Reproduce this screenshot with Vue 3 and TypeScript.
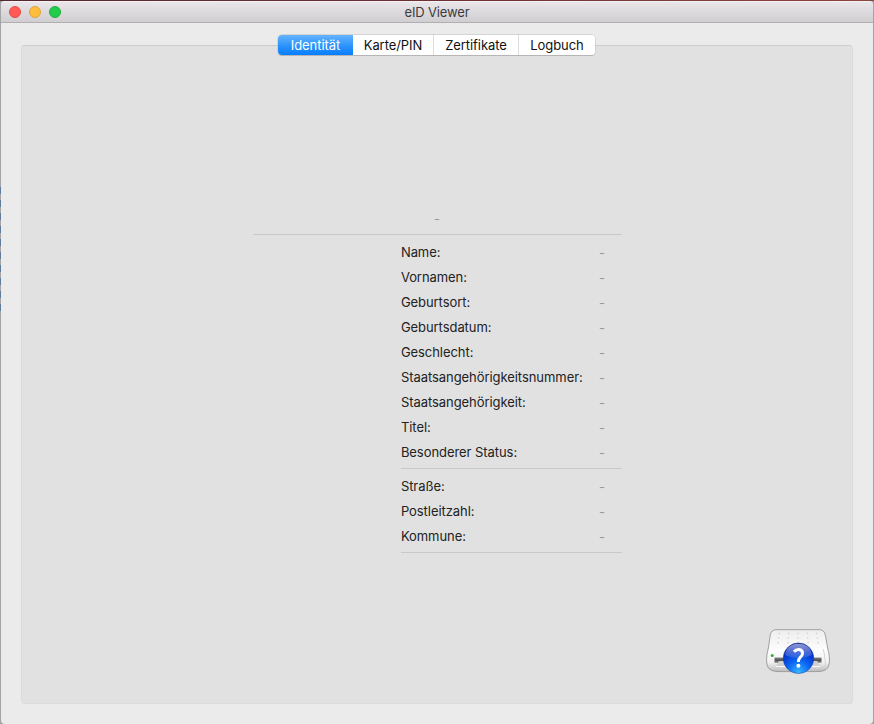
<script setup lang="ts">
import { ref } from 'vue'

interface Field {
  label: string
  value: string
}

const tabs: string[] = ['Identität', 'Karte/PIN', 'Zertifikate', 'Logbuch']
const active = ref<number>(0)

const toFields = (labels: string[]): Field[] => labels.map((label) => ({ label, value: '-' }))

const groups: Field[][] = [
  toFields([
    'Name:',
    'Vornamen:',
    'Geburtsort:',
    'Geburtsdatum:',
    'Geschlecht:',
    'Staatsangehörigkeitsnummer:',
    'Staatsangehörigkeit:',
    'Titel:',
    'Besonderer Status:',
  ]),
  toFields(['Straße:', 'Postleitzahl:', 'Kommune:']),
]

const dots: { x: number; y: number }[] = [0, 1, 2].flatMap((r) =>
  [0, 1, 2, 3, 4].map((c) => ({ x: 13 + c * 10 - (c - 2) * (2 - r) * 0.3, y: 4.3 + r * 4.7 })),
)
</script>

<template>
  <div class="desktop">
    <main class="window">
      <header class="titlebar">
        <div class="lights">
          <i class="light close"></i>
          <i class="light minimize"></i>
          <i class="light zoom"></i>
        </div>
        <h1 class="title">eID Viewer</h1>
      </header>
      <div class="content">
        <section class="panel">
          <nav class="tabs">
            <button
              v-for="(tab, i) in tabs"
              :key="tab"
              type="button"
              :class="['tab', 'tab-' + i, { active: active === i }]"
              @click="active = i"
            >
              {{ tab }}
            </button>
          </nav>
          <div class="identity">
            <div class="card-type"><span>-</span></div>
            <div v-for="(group, g) in groups" :key="g" class="group">
              <div v-for="field in group" :key="field.label" class="row">
                <span class="label">{{ field.label }}</span>
                <span class="value">{{ field.value }}</span>
              </div>
            </div>
          </div>
          <svg class="reader" width="66" height="48" viewBox="0 0 66 48">
            <defs>
              <linearGradient id="top" x1="0" y1="0" x2="0" y2="1">
                <stop offset="0" stop-color="#ededed" />
                <stop offset="0.4" stop-color="#fafafa" />
                <stop offset="0.75" stop-color="#f4f4f4" />
                <stop offset="1" stop-color="#bdbdbd" />
              </linearGradient>
              <linearGradient id="front" x1="0" y1="0" x2="0" y2="1">
                <stop offset="0" stop-color="#ffffff" />
                <stop offset="0.65" stop-color="#f1f1f1" />
                <stop offset="1" stop-color="#c4c4c4" />
              </linearGradient>
              <linearGradient id="slot" x1="0" y1="0" x2="0" y2="1">
                <stop offset="0" stop-color="#8a8a8a" />
                <stop offset="0.5" stop-color="#4c4c4c" />
                <stop offset="1" stop-color="#999" />
              </linearGradient>
              <radialGradient id="ball" cx="0.5" cy="0.95" r="0.9">
                <stop offset="0" stop-color="#35b8ff" />
                <stop offset="0.4" stop-color="#0d68f5" />
                <stop offset="0.8" stop-color="#042fc8" />
                <stop offset="1" stop-color="#02189a" />
              </radialGradient>
              <linearGradient id="gloss" x1="0" y1="0" x2="0" y2="1">
                <stop offset="0" stop-color="#fff" stop-opacity="0.55" />
                <stop offset="1" stop-color="#fff" stop-opacity="0.1" />
              </linearGradient>
            </defs>
            <path
              d="M9 1.1Q10 .7 12 .7H54Q56 .7 57.4 1.4Q60 3 60.6 7L62.6 19Q64.5 25 64.5 31Q64.4 38 61 40.5Q58 42.6 52 42.6H14Q8 42.6 5 40.5Q1.6 38 1.6 31Q1.5 25 3.4 19L5.4 5Q6 2 9 1.1Z"
              fill="url(#top)"
              stroke="#8f8f8f"
              stroke-width="0.8"
            />
            <path
              d="M4.5 19.5H61.5Q63.5 25 63.4 31Q63.4 36.5 60.5 39Q58 41 52 41H14Q8 41 5.5 39Q2.6 36.5 2.6 31Q2.5 25 4.5 19.5Z"
              fill="url(#front)"
            />
            <circle v-for="(d, i) in dots" :key="i" :cx="d.x" :cy="d.y" r="0.85" fill="#d5d5d5" />
            <path d="M58 20Q60 25 60.5 38" fill="none" stroke="#d4d4d4" />
            <rect x="9.5" y="28.5" width="47" height="5.4" fill="url(#slot)" />
            <path d="M14 32H52L55 37H11Z" fill="#d0d0d0" />
            <path d="M11 37.5H55" stroke="#fff" stroke-width="0.8" />
            <circle cx="7.2" cy="26.6" r="1.5" fill="#35a83c" />
            <circle cx="33.5" cy="29.3" r="15.3" fill="url(#ball)" stroke="#1a3fa6" stroke-width="0.5" />
            <path d="M20 26Q21.5 15 33.5 14.8Q45.5 15 47 26Q41 29 33.5 29Q26 29 20 26Z" fill="url(#gloss)" />
            <path
              d="M29 22.7Q31 20.4 33.9 20.6Q37.7 21 37.5 24.6Q37.3 26.6 35.2 28.4Q33.4 30 33.4 33"
              fill="none"
              stroke="#fff"
              stroke-width="3"
            />
            <circle cx="33.4" cy="36.7" r="2" fill="#fff" />
          </svg>
        </section>
      </div>
    </main>
  </div>
</template>

<style>
body {
  margin: 0;
  overflow: hidden;
}
</style>

<style scoped>
.desktop {
  box-sizing: border-box;
  width: 874px;
  height: 724px;
  padding: 1px 1px 0;
  background:
    linear-gradient(90deg, #54292e, #6b3236 50%, #8a4640) 0 0 / 100% 1px no-repeat,
    repeating-linear-gradient(#5f7c9e 0 7px, #a5a3a3 7px 13px) 0 187px / 1px 130px no-repeat,
    #a3a4a7;
  font-family: Inter, 'Liberation Sans', sans-serif;
  font-size: 13px;
  color: #222;
}
.window {
  display: flex;
  flex-direction: column;
  width: 872px;
  height: 723px;
  border-radius: 4px;
  background: #ebebeb;
  overflow: hidden;
}
.titlebar {
  box-sizing: border-box;
  display: grid;
  grid-template-columns: 66px 1fr 66px;
  align-items: center;
  height: 22px;
  flex: none;
  background: linear-gradient(#e9e5e9, #d0ced0);
  border-top: 1px solid #f4f0f4;
  border-bottom: 1px solid #b1afb1;
}
.lights {
  display: flex;
  gap: 8px;
  padding-left: 8px;
}
.light {
  box-sizing: border-box;
  width: 12px;
  height: 12px;
  border-radius: 50%;
}
.close {
  background: #ff5b54;
  border: 1px solid #e64943;
}
.minimize {
  background: #ffbd3c;
  border: 1px solid #e3a238;
}
.zoom {
  background: #21cc4b;
  border: 1px solid #1bb23a;
}
.title {
  margin: 0;
  text-align: center;
  font-size: 13px;
  line-height: 20px;
  letter-spacing: -0.15px;
  font-weight: 400;
  color: #3c3a3c;
}
.content {
  display: flex;
  flex: 1;
  padding: 22px 20px 20px;
}
.panel {
  box-sizing: border-box;
  display: flex;
  flex-direction: column;
  align-items: center;
  width: 832px;
  height: 659px;
  border: 1px solid #dbdbdb;
  border-top-color: #cdcdcd;
  border-radius: 4px;
  background: #e1e1e1;
}
.tabs {
  box-sizing: border-box;
  display: flex;
  flex: none;
  width: 317px;
  height: 20px;
  margin: -11px 1px 0 0;
  border-radius: 4px;
  background: #fff;
  box-shadow: 0 0 0 0.5px #bdbdbd, 0 1px 0 #adadad;
  overflow: hidden;
}
.tab {
  box-sizing: border-box;
  padding: 0;
  border: 0;
  border-left: 1px solid #dedede;
  background: #fff;
  font: inherit;
  line-height: 19px;
  letter-spacing: -0.06px;
  text-align: center;
  color: #111;
  white-space: nowrap;
}
.tab-0 {
  width: 75px;
  border-left: 0;
}
.tab-1 {
  width: 80px;
  border-left: 0;
}
.tab-2 {
  width: 85px;
}
.tab-3 {
  width: 77px;
}
.tab.active {
  background: linear-gradient(#65b3fb, #2b93fc 55%, #097dff);
  color: #fff;
}
.identity {
  display: flex;
  flex-direction: column;
  align-items: flex-end;
  width: 369px;
  margin-top: 151px;
}
.card-type {
  box-sizing: border-box;
  width: 369px;
  height: 29px;
  margin-bottom: 5px;
  border-bottom: 1px solid #c8c8c8;
  line-height: 27px;
  text-align: center;
  color: #999;
}
.group {
  width: 221px;
  margin-bottom: 5px;
  padding-bottom: 3px;
  border-bottom: 1px solid #c8c8c8;
}
.row {
  display: grid;
  grid-template-columns: 182px 1fr;
  height: 25px;
  line-height: 25px;
  white-space: nowrap;
}
.label {
  padding-left: 0.4px;
  letter-spacing: -0.06px;
}
.value {
  line-height: 27px;
  text-align: center;
  color: #999;
}
.reader {
  align-self: flex-end;
  margin: auto 21px 26px 0;
}
</style>
